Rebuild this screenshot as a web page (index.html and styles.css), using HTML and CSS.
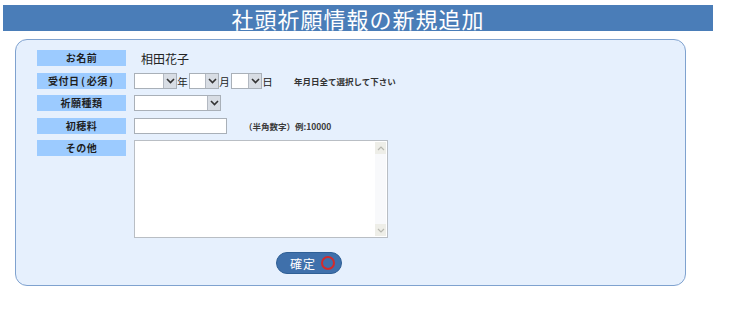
FILE: index.html
```html
<!DOCTYPE html>
<html lang="ja">
<head>
<meta charset="utf-8">
<title>社頭祈願情報の新規追加</title>
<link rel="stylesheet" href="styles.css">
</head>
<body>
<h1 class="title">社頭祈願情報の新規追加</h1>
<div class="panel">
  <div class="form">
    <div class="label">お名前</div>
    <div class="value"><span class="name">相田花子</span></div>

    <div class="label">受付日<span class="paren">(</span>必須<span class="paren">)</span></div>
    <div class="value">
      <span class="sel w43"><span class="arrow"><svg width="9" height="6" viewBox="0 0 9 6"><path d="M1 1 L4.5 4.5 L8 1" fill="none" stroke="#333" stroke-width="1.6"/></svg></span></span><span class="unit">年</span><span class="sel w30"><span class="arrow"><svg width="9" height="6" viewBox="0 0 9 6"><path d="M1 1 L4.5 4.5 L8 1" fill="none" stroke="#333" stroke-width="1.6"/></svg></span></span><span class="unit">月</span><span class="sel w31"><span class="arrow"><svg width="9" height="6" viewBox="0 0 9 6"><path d="M1 1 L4.5 4.5 L8 1" fill="none" stroke="#333" stroke-width="1.6"/></svg></span></span><span class="unit">日</span>
      <span class="note note-date">年月日全て選択して下さい</span>
    </div>

    <div class="label">祈願種類</div>
    <div class="value">
      <span class="sel w87"><span class="arrow"><svg width="9" height="6" viewBox="0 0 9 6"><path d="M1 1 L4.5 4.5 L8 1" fill="none" stroke="#333" stroke-width="1.6"/></svg></span></span>
    </div>

    <div class="label">初穂料</div>
    <div class="value">
      <span class="input"></span>
      <span class="note note-fee">（半角数字）例:10000</span>
    </div>

    <div class="label">その他</div>
    <div class="value">
      <div class="textarea">
        <div class="scroll">
          <span class="sbtn"><svg width="8" height="5" viewBox="0 0 8 5"><path d="M1 4 L4 1 L7 4" fill="none" stroke="#b8b8b0" stroke-width="1.2"/></svg></span>
          <span class="track"></span>
          <span class="sbtn"><svg width="8" height="5" viewBox="0 0 8 5"><path d="M1 1 L4 4 L7 1" fill="none" stroke="#b8b8b0" stroke-width="1.2"/></svg></span>
        </div>
      </div>
    </div>
  </div>
  <div class="actions">
    <button class="btn" type="button">確定<span class="ring"></span></button>
  </div>
</div>
</body>
</html>
```

FILE: styles.css
```css
* { box-sizing: border-box; }
html, body { margin: 0; padding: 0; background: #ffffff; }
body {
  font-family: "Noto Sans CJK JP", "Noto Sans", sans-serif;
  color: #222;
  padding: 5px 0 0 3px;
}
.title {
  margin: 0;
  width: 710px;
  height: 26px;
  background: #4a7db8;
  color: #fff;
  font-weight: normal;
  font-size: 22px;
  letter-spacing: 1px;
  line-height: 26px;
  text-align: center;
}
.panel {
  margin: 8px 0 0 12px;
  width: 671px;
  height: 247px;
  background: #e6f0fd;
  border: 1px solid #7fa2cf;
  border-radius: 12px;
  padding: 10px 0 0 21px;
}
.form {
  display: grid;
  grid-template-columns: 89px 1fr;
  grid-template-rows: 23px 22px 23px 22px auto;
  column-gap: 8px;
  align-items: start;
}
.label {
  height: 16px;
  background: #9ccbff;
  font-size: 10px;
  font-weight: bold;
  letter-spacing: 0.5px;
  line-height: 16px;
  text-align: center;
  color: #1e1e1e;
}
.paren { margin: 0 1.5px; }
.value {
  display: flex;
  align-items: center;
  height: 16px;
}
.name {
  font-size: 12px;
  padding-left: 7px;
  color: #222;
}
.sel {
  display: inline-flex;
  justify-content: flex-end;
  height: 16px;
  background: #fff;
  border: 1px solid #a9b0b8;
}
.w43 { width: 43px; }
.w30 { width: 30px; }
.w31 { width: 31px; }
.w87 { width: 87px; }
.arrow {
  width: 13px;
  height: 14px;
  background: #d8dde4;
  border-left: 1px solid #b3b9c2;
  display: flex;
  align-items: center;
  justify-content: center;
}
.unit {
  font-size: 10.5px;
  width: 11px;
  margin-right: 1px;
  text-align: center;
}
.note {
  font-size: 8.5px;
  color: #333;
}
.note-date { margin-left: 20px; font-weight: bold; }
.note-fee { margin-left: 17px; font-weight: bold; color: #3a3a3a; }
.input {
  display: inline-block;
  width: 93px;
  height: 16px;
  background: #fff;
  border: 1px solid #a9b0b8;
}
.textarea {
  width: 254px;
  height: 98px;
  background: #fff;
  border: 1px solid #b9bec4;
  display: flex;
  justify-content: flex-end;
  padding: 1px;
}
.form .value:last-child { height: auto; }
.scroll {
  width: 11px;
  background: #f8f9fb;
  display: flex;
  flex-direction: column;
}
.sbtn {
  height: 12px;
  background: #eeeee8;
  display: flex;
  align-items: center;
  justify-content: center;
}
.track { flex: 1; }
.actions {
  padding: 14px 0 0 239px;
}
.btn {
  display: flex;
  align-items: center;
  width: 66px;
  height: 22px;
  padding: 0 0 0 13px;
  border: 1px solid #2f5f95;
  border-radius: 11px;
  background: #3f70ab;
  color: #fff;
  font-family: "Noto Sans CJK JP", sans-serif;
  font-size: 12px;
  letter-spacing: 1px;
}
.ring {
  display: inline-block;
  width: 14px;
  height: 14px;
  margin-left: 5px;
  border: 2.5px solid #d42a2a;
  border-radius: 50%;
}
```
